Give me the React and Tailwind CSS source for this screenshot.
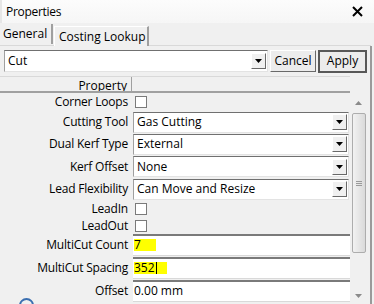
import React from "react";

const font = { fontFamily: '"Open Sans", "Noto Sans", Arial, sans-serif' };

function Arrow() {
  return (
    <div className="w-[15px] h-[16px] bg-[#f0f0f0] border border-t-white border-l-white border-r-[#696969] border-b-[#696969] flex items-center justify-center shrink-0">
      <svg width="7" height="4" viewBox="0 0 7 4"><path d="M0 0h7L3.5 4z" fill="#000" /></svg>
    </div>
  );
}

function Drop({ value }) {
  return (
    <div className="h-[21px] w-[216px] bg-white border border-t-[#707070] border-l-[#a0a0a0] border-r-[#e3e3e3] border-b-[#e3e3e3] flex items-center justify-between pl-[3px] pr-[1px]">
      <span className="text-[12px] text-black leading-none">{value}</span>
      <Arrow />
    </div>
  );
}

function Field({ children }) {
  return (
    <div className="h-[22px] w-[217px] bg-white border-t-2 border-t-[#7a7a7a] border-b border-b-[#d9d9d9] flex items-center pl-[1px]">
      {children}
    </div>
  );
}

function Check() {
  return <div className="w-[12px] h-[12px] bg-white border border-[#7a7a7a] ml-[2px]" />;
}

function Row({ label, h, children }) {
  return (
    <div className="flex items-center" style={{ height: h }}>
      <div className="w-[131px] pr-[3px] text-right text-[12px] text-black leading-none whitespace-nowrap tracking-[-0.2px]">{label}</div>
      <div className="w-[2px]" />
      <div className="flex items-center">{children}</div>
    </div>
  );
}

export default function App() {
  return (
    <div className="w-[374px] h-[304px] overflow-hidden bg-[#f0f0f0] relative" style={font}>
      {/* title bar */}
      <div className="h-[23px] bg-gradient-to-b from-[#fcfcfc] to-[#f6f6f6] border-l-2 border-[#e6e6e6] flex items-center justify-between pl-[4px] pr-[11px]">
        <span className="text-[12px] text-black tracking-[-0.3px]">Properties</span>
        <svg width="11" height="11" viewBox="0 0 11 11"><path d="M1 1L10 10M10 1L1 10" stroke="#000" strokeWidth="2" /></svg>
      </div>
      {/* tabs */}
      <div className="h-[23px] flex items-end relative">
        <div className="absolute left-0 right-[3px] bottom-0 h-px bg-[#d9d9d9]" />
        <div className="relative h-[20px] w-[53px] bg-[#f0f0f0] border-r-2 border-r-[#a0a0a0] flex items-center pl-[3px] text-[12px] text-black z-10 mb-[1px] self-start mt-[1px]">General</div>
        <div className="relative h-[20px] w-[95px] ml-[1px] bg-[#f0f0f0] border-t border-t-white border-l border-l-white border-r-2 border-r-[#a0a0a0] flex items-center pl-[4px] text-[12px] text-black">Costing Lookup</div>
      </div>
      {/* panel */}
      <div className="absolute left-0 top-[46px] w-[372px] h-[258px] border-r-2 border-r-[#9a9a9a]">
        <div className="flex items-center h-[26px] pl-[4px] pt-[4px]">
          <div className="h-[22px] w-[264px] bg-white border border-t-[#707070] border-l-[#a0a0a0] border-r-[#e3e3e3] border-b-[#e3e3e3] flex items-center justify-between pl-[3px] pr-[1px]">
            <span className="text-[12px] text-black leading-none">Cut</span>
            <Arrow />
          </div>
          <div className="ml-[2px] h-[22px] w-[46px] bg-[#ececec] border border-t-white border-l-white border-r-[#696969] border-b-[#696969] flex items-center justify-center text-[12px] text-black">Cancel</div>
          <div className="ml-[2px] h-[23px] w-[49px] bg-[#ececec] border-2 border-[#585858] flex items-center justify-center text-[12px] text-black">Apply</div>
        </div>
        {/* grid */}
        <div className="mt-[4px] flex">
          <div className="w-[350px]">
            <div className="h-[17px] border-t border-t-[#d9d9d9] border-b-2 border-b-[#a0a0a0] flex overflow-hidden">
              <div className="w-[132px] border-r border-r-[#a0a0a0] text-right pr-[4px] text-[12px] leading-[18px] text-black">Property</div>
            </div>
            <Row label="Corner Loops" h={18}><Check /></Row>
            <Row label="Cutting Tool" h={22}><Drop value="Gas Cutting" /></Row>
            <Row label="Dual Kerf Type" h={22}><Drop value="External" /></Row>
            <Row label="Kerf Offset" h={23}><Drop value="None" /></Row>
            <Row label="Lead Flexibility" h={22}><Drop value="Can Move and Resize" /></Row>
            <Row label="LeadIn" h={18}><Check /></Row>
            <Row label="LeadOut" h={15}><Check /></Row>
            <Row label="MultiCut Count" h={23}>
              <Field><span className="bg-[#ffff00] w-[22px] h-[12px] flex items-center text-[12px] text-black leading-none">7</span></Field>
            </Row>
            <Row label="MultiCut Spacing" h={23}>
              <Field><span className="bg-[#ffff00] w-[33px] h-[12px] flex items-center text-[12px] text-black leading-none">352<span className="w-px h-[12px] bg-black ml-[1px]" /></span></Field>
            </Row>
            <Row label="Offset" h={23}>
              <Field><span className="text-[12px] text-black leading-none">0.00 mm</span></Field>
            </Row>
          </div>
          {/* scrollbar */}
          <div className="w-[17px] mt-[17px] flex flex-col items-center">
            <div className="h-[20px] flex items-center justify-center">
              <svg width="7" height="4" viewBox="0 0 7 4"><path d="M3.5 0L7 4H0z" fill="#8a8a8a" /></svg>
            </div>
            <div className="w-[14px] h-[140px] bg-gradient-to-r from-[#f2f2f2] to-[#dadada] border border-[#adadad] rounded-[2px] flex items-center justify-center">
              <div className="flex flex-col gap-[1px]">
                <div className="w-[6px] h-px bg-[#9a9a9a]" />
                <div className="w-[6px] h-px bg-[#9a9a9a]" />
                <div className="w-[6px] h-px bg-[#9a9a9a]" />
              </div>
            </div>
            <div className="h-[41px]" />
            <svg width="7" height="4" viewBox="0 0 7 4"><path d="M0 0h7L3.5 4z" fill="#8a8a8a" /></svg>
          </div>
        </div>
      </div>
      <div className="absolute left-[19px] top-[298px] w-[15px] h-[15px] rounded-full border-2 border-[#3b6fb0]" />
    </div>
  );
}
